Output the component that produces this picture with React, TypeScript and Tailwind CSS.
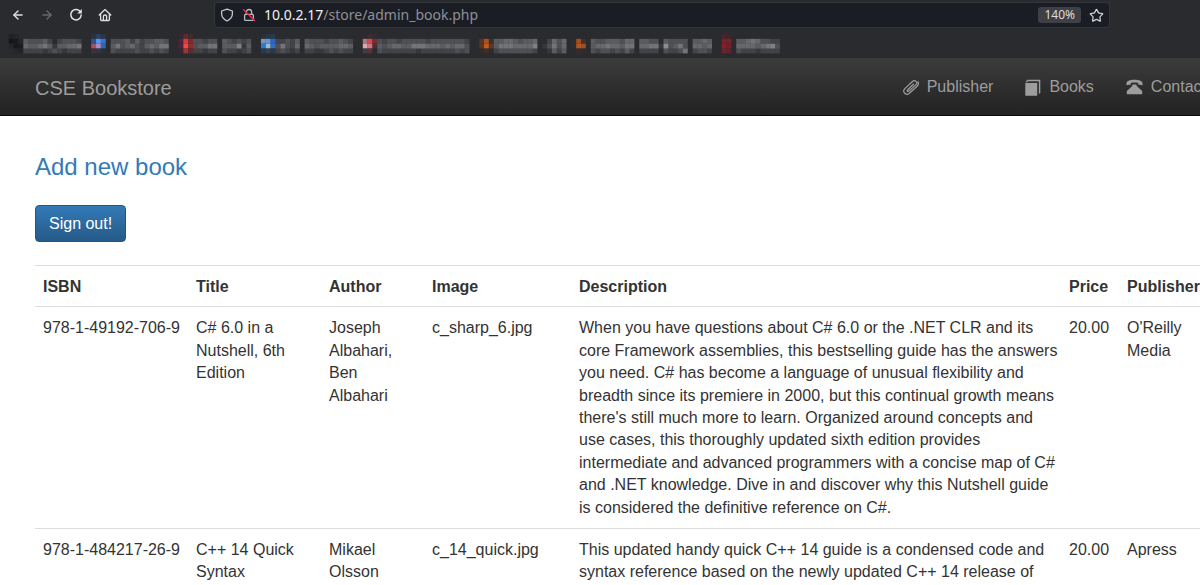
import React from "react";
import { ArrowLeft, ArrowRight, Star } from "lucide-react";

const CELL = 4.85;

// One digit per cell: 0 is the bar's own colour, 9 the brightest.
const segments = [
  { start: 0, cells: ["433342023332", "544564144556", "222212321222"] },
  { start: 18, cells: ["333424233443", "463453245466", "322223223232"] },
  { start: 35, cells: ["33233", "34466", "22122"] },
  { start: 41, cells: ["432323", "444714", "322123"] },
  { start: 52, cells: ["22324", "36325", "23212"] },
  { start: 58, cells: ["4333233432", "5434444554", "2211232322"] },
  { start: 73, cells: ["3233233333233333332", "4345544666555454553", "3222222212222222323"] },
  { start: 97, cells: ["445543445", "466655557", "233333332"] },
  { start: 107, cells: ["02535", "13635", "01424"] },
  { start: 117, cells: ["433444355", "455655466", "323323242"] },
  { start: 127, cells: ["4433043333", "5566183463", "2222032236"] },
  { start: 138, cells: ["4454", "5545", "2332"] },
  { start: 147, cells: ["445653322", "555545673", "322212222"] },
];

const favicons = [
  { start: -3, rows: [["#202126", "#24252a", "#2a2b2f"], ["#15161a", "#191a1e", "#25262a"], ["#24252a", "#17181b", "#1b1c20"], ["#2a2b2f", "#25262a", "#222327"]] },
  { start: 14, rows: [["#2c3340", "#2d3f63", "#2c3648"], ["#31538c", "#5597f5", "#3e72c9"], ["#a25463", "#ab8cc4", "#3564b0"], ["#3f3037", "#38343f", "#2b3038"]] },
  { start: 32, rows: [["#352831", "#5a2a2f", "#432a2d"], ["#4e2339", "#dc3a3b", "#7b2a2d"], ["#4e2339", "#ef4949", "#8d2e30"], ["#3b2730", "#9a3437", "#5b2c30"]] },
  { start: 49, rows: [["#2b2f36", "#29354a", "#293750"], ["#8296ad", "#6297df", "#2766ce"], ["#247fc9", "#9bb9da", "#356bba"], ["#293b4c", "#37424f", "#2c3746"]] },
  { start: 70, rows: [["#2e2c30", "#3a2d31", "#322b2f"], ["#b0767f", "#d4484d", "#762d34"], ["#d9a7b2", "#d2747f", "#493036"], ["#453c42", "#55343b", "#2e2b2f"]] },
  { start: 94, rows: [["#2a2b2f", "#2a2b2f", "#2a2b2f"], ["#573522", "#a9501d", "#3b3028"], ["#573522", "#c8581c", "#5a3825"], ["#302c2c", "#3c2f2b", "#2d2c2e"]] },
  { start: 113, rows: [["#2a2b2f", "#2a2b2f", "#2a2b2f"], ["#302d2e", "#a44d1e", "#45302a"], ["#302d2e", "#b4551f", "#99502a"], ["#2a2b2f", "#352d2c", "#322c2c"]] },
  { start: 144, rows: [["#48252c", "#40262c"], ["#7c2027", "#7b2128"], ["#87202a", "#722128"], ["#71222a", "#62232b"]] },
];

function BookmarkStrip() {
  return (
    <svg className="block h-[29px] w-full" aria-hidden="true">
      <g transform="translate(23.3 5)">
        {favicons.map((f) =>
          f.rows.map((row, r) =>
            row.map((fill, i) => (
              <rect key={`${f.start}-${r}-${i}`} x={(f.start + i) * CELL} y={r * CELL} width={CELL} height={CELL} fill={fill} />
            ))
          )
        )}
        {segments.map((s) =>
          s.cells.map((row, r) =>
            row.split("").map((level, i) => (
              <rect
                key={`${s.start}-${r}-${i}`}
                x={(s.start + i) * CELL}
                y={(r + 1) * CELL}
                width={CELL}
                height={CELL}
                fill="#b0b1b5"
                fillOpacity={Number(level) / 11}
              />
            ))
          )
        )}
      </g>
    </svg>
  );
}

function ReloadIcon() {
  return (
    <svg viewBox="0 0 14 14" className="size-[14px]" fill="none" stroke="currentColor" strokeWidth="1.5" aria-hidden="true">
      <path d="M11.6 4.2A5.2 5.2 0 1 0 12.2 7" strokeLinecap="round" />
      <path d="M12.8 1v4.6H8.2z" fill="currentColor" stroke="none" />
    </svg>
  );
}

function HomeIcon() {
  return (
    <svg viewBox="0 0 14 14" className="size-[14px]" fill="none" stroke="currentColor" strokeWidth="1.3" strokeLinejoin="round" strokeLinecap="round" aria-hidden="true">
      <path d="M1.2 7 7 1.6 12.8 7M2.6 6v5.6q0 .9.9.9h7q.9 0 .9-.9V6" />
      <path d="M5.4 12.4V8.6a1.6 1.6 0 0 1 3.2 0v3.8" />
    </svg>
  );
}

function ShieldIcon() {
  return (
    <svg viewBox="0 0 14 14" className="size-[14px]" fill="none" stroke="#c6c7ca" strokeWidth="1.3" strokeLinejoin="round" aria-hidden="true">
      <path d="M7 1.1 12.4 3v2.6c0 3.2-1.7 5.7-5.4 7.4C3.3 11.3 1.6 8.8 1.6 5.6V3z" />
    </svg>
  );
}

function InsecureIcon() {
  return (
    <svg viewBox="0 0 14 14" className="size-[14px]" fill="none" strokeLinecap="round" aria-hidden="true">
      <rect x="2.6" y="6.4" width="8.8" height="6" rx="1" stroke="#b9babd" strokeWidth="1.3" />
      <path d="M4.3 6.2V4.200a2.7 2.700 0 0 1 5.4 0v2" stroke="#b9babd" strokeWidth="1.3" />
      <path d="m1.6 1.8 11 10.8" stroke="#e22850" strokeWidth="1.5" />
    </svg>
  );
}

function PaperclipIcon() {
  return (
    <svg viewBox="0 0 17 17" className="size-[17px]" fill="none" stroke="currentColor" strokeWidth="1.2" strokeLinecap="round" aria-hidden="true">
      <path d="M11.4 5.2 5.4 11a.9.9 0 0 0 1.300 1.300L14 5.600a2.300 2.300 0 0 0-3.300-3.300L2.600 9.800a3.300 3.300 0 0 0 4.600 4.700L15.800 6.500A3.500 3.500 0 0 0 16 2.800" />
    </svg>
  );
}

function BookIcon() {
  return (
    <svg viewBox="0 0 16 17" className="h-[17px] w-4" fill="currentColor" aria-hidden="true">
      <path d="M.3 4h11.9v12.7H.8a.5.5 0 0 1-.5-.5z" />
      <path d="M.3 3.3 2.4.8h12.9v13.3L13.9 15V2.3H3L2.2 3.3z" />
    </svg>
  );
}

function PhoneIcon() {
  return (
    <svg viewBox="0 0 17 16" className="h-4 w-[17px]" fill="currentColor" aria-hidden="true">
      <path d="M.5 6.200V4C.8 1.700 4.300.8 8.500.8s7.700.9 8 3.200v2.200l-4.300-.7V3.900c-1-.4-2.200-.5-3.700-.5s-2.700.1-3.700.5v1.600z" />
      <path d="M6.800 5.500h3.400L11 7.300l4.900 4.500q.3.300.3.800v2.600H.8v-2.600q0-.5.3-.8L6 7.300z" />
    </svg>
  );
}

const headings = ["ISBN", "Title", "Author", "Image", "Description", "Price", "Publisher"];

const books = [
  {
    isbn: "978-1-49192-706-9",
    title: "C# 6.0 in a Nutshell, 6th Edition",
    author: "Joseph Albahari, Ben Albahari",
    image: "c_sharp_6.jpg",
    description: `When you have questions about C# 6.0 or the .NET CLR and its
core Framework assemblies, this bestselling guide has the answers
you need. C# has become a language of unusual flexibility and
breadth since its premiere in 2000, but this continual growth means
there's still much more to learn. Organized around concepts and
use cases, this thoroughly updated sixth edition provides
intermediate and advanced programmers with a concise map of C#
and .NET knowledge. Dive in and discover why this Nutshell guide
is considered the definitive reference on C#.`,
    price: "20.00",
    publisher: "O'Reilly Media",
  },
  {
    isbn: "978-1-484217-26-9",
    title: "C++ 14 Quick Syntax",
    author: "Mikael Olsson",
    image: "c_14_quick.jpg",
    description: `This updated handy quick C++ 14 guide is a condensed code and
syntax reference based on the newly updated C++ 14 release of`,
    price: "20.00",
    publisher: "Apress",
  },
];

const links = [
  { label: "Publisher", icon: <PaperclipIcon /> },
  { label: "Books", icon: <BookIcon /> },
  { label: "Contact", icon: <PhoneIcon /> },
];

export default function App() {
  return (
    <div className="h-screen overflow-hidden bg-white font-['Liberation_Sans',Arial,sans-serif] text-base leading-[1.4] text-[#333]">
      <div className="bg-[#2a2b2f] font-['Noto_Sans',sans-serif]">
        <div className="flex h-[29px] items-center pt-px">
          <div className="flex w-[214px] shrink-0 items-center gap-[15px] pl-[11px] text-[#e0e0e2]">
            <button aria-label="Back"><ArrowLeft size={14} strokeWidth={2.4} /></button>
            <button aria-label="Forward" className="text-[#66676b]"><ArrowRight size={14} strokeWidth={2.4} /></button>
            <button aria-label="Reload"><ReloadIcon /></button>
            <button aria-label="Home"><HomeIcon /></button>
          </div>
          <div className="mr-[90px] flex h-[26px] flex-1 items-center gap-2 rounded border border-[#35363b] bg-[#1b1d24] px-[5px]">
            <ShieldIcon />
            <InsecureIcon />
            <div className="flex-1 text-sm text-[#8f9094]">
              <span className="text-[#f0f0f2]">10.0.2.17</span>/store/admin_book.php
            </div>
            <button className="h-4 rounded-[3px] bg-[#3f4045] px-[6px] text-xs leading-4 text-[#dcdcde]">140%</button>
            <button aria-label="Bookmark this page" className="text-[#d0d0d3]"><Star size={15} strokeWidth={2} /></button>
          </div>
        </div>
        <BookmarkStrip />
      </div>

      <nav className="border-b border-[#080808] bg-linear-to-b from-[#3c3c3c] to-[#222] text-[#9d9d9d]">
        <div className="flex h-[57px] min-w-[1206px] items-center pl-[35px] pt-[2px]">
          <a href="#" className="text-xl">CSE Bookstore</a>
          <ul className="ml-auto flex gap-8">
            {links.map((link) => (
              <li key={link.label}>
                <a href="#" className="flex items-center gap-2">{link.icon}{link.label}</a>
              </li>
            ))}
          </ul>
        </div>
      </nav>

      <main className="min-w-[1207px] pl-[35px] pt-[35px]">
        <a href="#" className="block text-2xl text-[#337ab7]">Add new book</a>
        <button className="mt-[22px] block h-[37px] rounded border border-[#245580] bg-linear-to-b from-[#337ab7] to-[#265a88] px-[13px] pt-[2px] text-white">
          Sign out!
        </button>
        <table className="mt-[23px] w-full table-fixed border-collapse text-left">
          <colgroup>
            <col className="w-[153px]" />
            <col className="w-[133px]" />
            <col className="w-[103px]" />
            <col className="w-[147px]" />
            <col className="w-[490px]" />
            <col className="w-[58px]" />
            <col />
          </colgroup>
          <thead>
            <tr className="border-y border-[#ddd]">
              {headings.map((h) => <th key={h} className="pb-2 pl-2 pt-[10px]">{h}</th>)}
            </tr>
          </thead>
          <tbody>
            {books.map((book) => (
              <tr key={book.isbn} className="border-b border-[#ddd] align-top">
                <td className="pb-[9px] pl-2 pt-[10px]">{book.isbn}</td>
                <td className="px-2 pb-[9px] pt-[10px]">{book.title}</td>
                <td className="px-2 pb-[9px] pt-[10px]">{book.author}</td>
                <td className="px-2 pb-[9px] pt-[10px]">{book.image}</td>
                <td className="whitespace-pre-line pb-[9px] pl-2 pt-[10px]">{book.description}</td>
                <td className="pb-[9px] pl-2 pt-[10px]">{book.price}</td>
                <td className="px-2 pb-[9px] pt-[10px]">{book.publisher}</td>
              </tr>
            ))}
          </tbody>
        </table>
      </main>
    </div>
  );
}
